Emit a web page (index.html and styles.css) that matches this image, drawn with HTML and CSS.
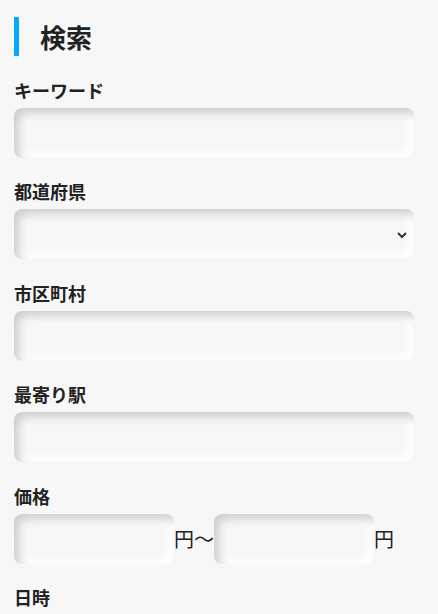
FILE: index.html
```html
<!DOCTYPE html>
<html lang="ja">
<head>
    <meta charset="UTF-8">
    <meta name="viewport" content="width=device-width, initial-scale=1.0">
    <title>検索</title>
    <link rel="stylesheet" href="styles.css">
</head>
<body>
    <div class="search">
        <h1 class="search-title">検索</h1>

        <div class="field">
            <label class="field-label" for="keyword">キーワード</label>
            <input type="text" id="keyword" class="field-input">
        </div>

        <div class="field">
            <label class="field-label" for="pref">都道府県</label>
            <div class="select-wrap">
                <select id="pref" class="field-input field-select">
                    <option value=""></option>
                </select>
                <svg class="select-arrow" width="12" height="8" viewBox="0 0 12 8">
                    <path d="M2 2 L6 6 L10 2" fill="none" stroke="#333" stroke-width="2"/>
                </svg>
            </div>
        </div>

        <div class="field">
            <label class="field-label" for="city">市区町村</label>
            <input type="text" id="city" class="field-input">
        </div>

        <div class="field">
            <label class="field-label" for="station">最寄り駅</label>
            <input type="text" id="station" class="field-input">
        </div>

        <div class="field">
            <label class="field-label" for="priceMin">価格</label>
            <div class="price-row">
                <input type="text" id="priceMin" class="field-input price-input">
                <span class="unit">円～</span>
                <input type="text" id="priceMax" class="field-input price-input">
                <span class="unit">円</span>
            </div>
        </div>

        <div class="field">
            <label class="field-label" for="date">日時</label>
        </div>
    </div>
</body>
</html>
```

FILE: styles.css
```css
* {
    margin: 0;
    padding: 0;
    box-sizing: border-box;
    font-family: "Noto Sans CJK JP", "Noto Sans", sans-serif;
}

body {
    background: #f7f7f7;
    color: #222;
}

.search {
    padding: 17px 14px;
    width: 428px;
}

.search-title {
    border-left: 5px solid #00aaff;
    padding-left: 21px;
    height: 39px;
    line-height: 39px;
    font-size: 26px;
    font-weight: bold;
    margin-bottom: 21px;
}

.field {
    margin-bottom: 20.4px;
}

.field-label {
    display: block;
    font-size: 18px;
    font-weight: bold;
    line-height: 27px;
    margin-bottom: 4px;
}

.field-input {
    display: block;
    width: 400px;
    height: 50px;
    border: none;
    outline: none;
    border-radius: 8px;
    background: #f7f7f7;
    box-shadow: inset 5px 5px 8px #cfcfcf, inset -5px -5px 8px #ffffff;
    padding: 0 14px;
    font-size: 16px;
}

.select-wrap {
    position: relative;
    width: 400px;
}

.field-select {
    appearance: none;
    -webkit-appearance: none;
}

.select-arrow {
    position: absolute;
    right: 6px;
    top: 22px;
}

.price-row {
    display: flex;
    align-items: center;
}

.price-input {
    width: 160px;
}

.unit {
    font-size: 20px;
    line-height: 50px;
}
```
